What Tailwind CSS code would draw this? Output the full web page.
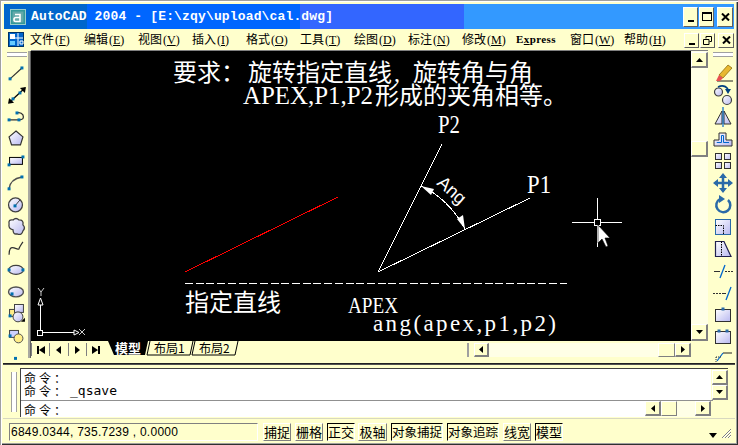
<!DOCTYPE html>
<html lang="zh">

<head>
    <meta charset="UTF-8" />
    <title>AutoCAD 2004</title>
    <script src="https://cdn.jsdelivr.net/npm/@tailwindcss/browser@4"></script>
</head>

<body class="bg-[#ffffcc] overflow-hidden">

    <!-- shared gradients for the toolbar icons -->
    <svg class="absolute w-0 h-0">
        <defs>
            <linearGradient id="lav" x1="0" y1="0" x2="1" y2="1">
                <stop offset="0" stop-color="#ffffff" />
                <stop offset="1" stop-color="#b8b8f0" />
            </linearGradient>
        </defs>
    </svg>

    <!-- Window -->
    <div class="w-[738px] h-[445px] flex flex-col pt-[4px] px-[3px] pb-[3px] bg-[#ffffcc] shadow-[inset_1px_1px_0_#a0a0a0,inset_2px_2px_0_#ffffff,inset_-1px_-1px_0_#303030,inset_-2px_-2px_0_#a0a0a0] font-['Noto_Sans_CJK_SC',sans-serif] text-black overflow-hidden">

        <!-- Title bar -->
        <div class="h-[25px] mx-[1px] shrink-0 flex items-center bg-[linear-gradient(90deg,#0066cc_83px,#0066ff_83px,#0066ff_296px,#3366ff_296px,#3366ff_460px,#3399ff_460px)]">
            <svg class="ml-[6px] w-[16px] h-[16px]" viewBox="0 0 16 16">
                <rect x="0.5" y="0.5" width="15" height="15" fill="#339999" stroke="#99cccc" />
                <rect x="2.5" y="2.5" width="11" height="11" fill="#66aaaa" />
                <path d="M5 5.5h5v7H5.5q-1.5 0-1.5-2t2-2h4M5 5.5" fill="none" stroke="#ffffff" stroke-width="1.6" />
            </svg>
            <span class="ml-[5px] font-['Liberation_Mono',monospace] font-bold text-[13px] tracking-[0.15px] text-white whitespace-pre">AutoCAD 2004 - [E:\zqy\upload\cal.dwg]</span>
            <div class="ml-auto flex mr-[1px]">
                <div class="w-[15px] h-[20px] flex items-end justify-center pb-[4px] bg-[#ffffcc] border-t border-l border-t-white border-l-white border-r border-b border-r-[#606060] border-b-[#606060]">
                    <div class="w-[6px] h-[2px] bg-black"></div>
                </div>
                <div class="ml-[1px] w-[15px] h-[20px] flex items-center justify-center bg-[#ffffcc] border-t border-l border-t-white border-l-white border-r border-b border-r-[#606060] border-b-[#606060]">
                    <div class="w-[10px] h-[9px] border border-t-2 border-black"></div>
                </div>
                <div class="ml-[3px] w-[16px] h-[20px] flex items-center justify-center bg-[#ffffcc] border-t border-l border-t-white border-l-white border-r border-b border-r-[#606060] border-b-[#606060]">
                    <svg class="w-[9px] h-[8px]" viewBox="0 0 9 8"><path d="M1 0.5 8 7.5M8 0.5 1 7.5" stroke="#000" stroke-width="2" /></svg>
                </div>
            </div>
        </div>

        <!-- Menu bar -->
        <div class="h-[21px] shrink-0 flex items-center text-[12px] leading-none">
            <svg class="ml-[5px] w-[16px] h-[15px]" viewBox="0 0 16 15">
                <rect x="0.5" y="0.5" width="15" height="14" fill="#0066cc" stroke="#003366" />
                <rect x="2" y="2" width="5" height="5" fill="#ffffff" />
                <rect x="2" y="9" width="5" height="4" fill="#66ccff" />
                <path d="M10 1v13M7 6h8M12 9h3v3h-3z" stroke="#ffffff" fill="none" />
            </svg>
            <div class="ml-[6px] w-[54px]">文件<span class="font-['Liberation_Serif',serif] text-[12px] ml-[1px]">(<u>F</u>)</span></div>
            <div class="w-[54px]">编辑<span class="font-['Liberation_Serif',serif] text-[12px] ml-[1px]">(<u>E</u>)</span></div>
            <div class="w-[54px]">视图<span class="font-['Liberation_Serif',serif] text-[12px] ml-[1px]">(<u>V</u>)</span></div>
            <div class="w-[54px]">插入<span class="font-['Liberation_Serif',serif] text-[12px] ml-[1px]">(<u>I</u>)</span></div>
            <div class="w-[54px]">格式<span class="font-['Liberation_Serif',serif] text-[12px] ml-[1px]">(<u>O</u>)</span></div>
            <div class="w-[54px]">工具<span class="font-['Liberation_Serif',serif] text-[12px] ml-[1px]">(<u>T</u>)</span></div>
            <div class="w-[54px]">绘图<span class="font-['Liberation_Serif',serif] text-[12px] ml-[1px]">(<u>D</u>)</span></div>
            <div class="w-[54px]">标注<span class="font-['Liberation_Serif',serif] text-[12px] ml-[1px]">(<u>N</u>)</span></div>
            <div class="w-[54px]">修改<span class="font-['Liberation_Serif',serif] text-[12px] ml-[1px]">(<u>M</u>)</span></div>
            <div class="w-[54px] font-['Liberation_Serif',serif] font-bold text-[11px] tracking-[0.4px]">E<u>x</u>press</div>
            <div class="w-[54px]">窗口<span class="font-['Liberation_Serif',serif] text-[12px] ml-[1px]">(<u>W</u>)</span></div>
            <div class="w-[54px]">帮助<span class="font-['Liberation_Serif',serif] text-[12px] ml-[1px]">(<u>H</u>)</span></div>
            <div class="ml-[6px] flex mt-[1px]">
                <div class="w-[15px] h-[15px] flex items-end justify-center pb-[2px] bg-[#ffffcc] border-t border-l border-t-white border-l-white border-r border-b border-r-[#606060] border-b-[#606060]">
                    <div class="w-[6px] h-[2px] bg-black"></div>
                </div>
                <div class="ml-[1px] w-[15px] h-[15px] flex items-center justify-center bg-[#ffffcc] border-t border-l border-t-white border-l-white border-r border-b border-r-[#606060] border-b-[#606060]">
                    <svg class="w-[9px] h-[9px]" viewBox="0 0 9 9"><path d="M3 2.5V.5h5.500v5H6.500M.5 3.500h5.500v5H.5z" fill="none" stroke="#000" /></svg>
                </div>
                <div class="ml-[3px] w-[16px] h-[15px] flex items-center justify-center bg-[#ffffcc] border-t border-l border-t-white border-l-white border-r border-b border-r-[#606060] border-b-[#606060]">
                    <svg class="w-[9px] h-[8px]" viewBox="0 0 9 8"><path d="M1 0.5 8 7.5M8 0.5 1 7.5" stroke="#000" stroke-width="2" /></svg>
                </div>
            </div>
        </div>

        <!-- Main area -->
        <div class="h-[313px] shrink-0 flex">

            <!-- Draw toolbar -->
            <div class="w-[25px] shrink-0 flex flex-col items-start overflow-hidden">
                <div class="ml-[4px] mt-[2px] w-[20px] h-[5px] border-y border-[#a0a0a0] bg-white shrink-0"></div>
                <div class="mt-[6px] h-[299px] flex flex-col overflow-hidden">
                    <!-- line -->
                    <svg class="w-[22px] h-[21.8px] ml-[2px] shrink-0" viewBox="0 0 22 22"><path d="M5 16 17 5" stroke="#303030" stroke-width="1.2" /><rect x="3.500" y="14.500" width="3" height="3" fill="#0070b0" /><rect x="15.500" y="3.500" width="3" height="3" fill="#0070b0" /></svg>
                    <!-- xline -->
                    <svg class="w-[22px] h-[21.8px] ml-[2px] shrink-0" viewBox="0 0 22 22"><path d="M4 18 20 3" stroke="#000" stroke-width="1.3" /><path d="M3 19 4 13 9 18zM21 2 20 8 15 3z" fill="#000" /><rect x="6.500" y="12.500" width="3" height="3" fill="#0070b0" /><rect x="13.500" y="6.500" width="3" height="3" fill="#0070b0" /></svg>
                    <!-- pline -->
                    <svg class="w-[22px] h-[21.8px] ml-[2px] shrink-0" viewBox="0 0 22 22"><path d="M4 13H14Q20 13 18 8 16 5 12 6" fill="none" stroke="#303030" stroke-width="1.3" /><rect x="2.500" y="11.500" width="3" height="3" fill="#0070b0" /><rect x="12.500" y="11.500" width="3" height="3" fill="#0070b0" /><rect x="10.500" y="4.500" width="3" height="3" fill="#0070b0" /></svg>
                    <!-- polygon -->
                    <svg class="w-[22px] h-[21.8px] ml-[2px] shrink-0" viewBox="0 0 22 22"><path d="M11 3 18 9 15.500 17H6.500L4 9z" fill="url(#lav)" stroke="#303030" stroke-width="1.200" /></svg>
                    <!-- rectangle -->
                    <svg class="w-[22px] h-[21.8px] ml-[2px] shrink-0" viewBox="0 0 22 22"><rect x="4.500" y="7.500" width="13" height="7" fill="url(#lav)" stroke="#000" /><rect x="2.500" y="13.500" width="3" height="3" fill="#0070b0" /><rect x="16.500" y="5.500" width="3" height="3" fill="#0070b0" /></svg>
                    <!-- arc -->
                    <svg class="w-[22px] h-[21.8px] ml-[2px] shrink-0" viewBox="0 0 22 22"><path d="M4 17Q5 7 17 5" fill="none" stroke="#505050" stroke-width="1.500" /><rect x="2.500" y="15.500" width="3" height="3" fill="#0070b0" /><rect x="15.500" y="3.500" width="3" height="3" fill="#0070b0" /></svg>
                    <!-- circle -->
                    <svg class="w-[22px] h-[21.8px] ml-[2px] shrink-0" viewBox="0 0 22 22"><circle cx="10.500" cy="11" r="7" fill="url(#lav)" stroke="#404040" stroke-width="1.300" /><path d="M10 12 15 6" stroke="#404040" /><rect x="8.500" y="10.500" width="3" height="3" fill="#0070b0" /></svg>
                    <!-- revcloud -->
                    <svg class="w-[22px] h-[21.8px] ml-[2px] shrink-0" viewBox="0 0 22 22"><path d="M4 8Q3 3 8 4 11 1 14 4 19 4 18 9 21 12 18 15 17 20 12 18 8 19 8 14 3 13 4 8z" fill="url(#lav)" stroke="#404040" stroke-width="1.300" /></svg>
                    <!-- spline -->
                    <svg class="w-[22px] h-[21.8px] ml-[2px] shrink-0" viewBox="0 0 22 22"><path d="M4 18Q4 9 9 11T14 12 18 5" fill="none" stroke="#303030" stroke-width="1.200" /></svg>
                    <!-- ellipse -->
                    <svg class="w-[22px] h-[21.8px] ml-[2px] shrink-0" viewBox="0 0 22 22"><ellipse cx="11" cy="11" rx="7.500" ry="4.500" fill="url(#lav)" stroke="#404040" stroke-width="1.200" /><rect x="2.500" y="9.500" width="3" height="3" fill="#0070b0" /><rect x="16.500" y="9.500" width="3" height="3" fill="#0070b0" /></svg>
                    <!-- ellipse arc -->
                    <svg class="w-[22px] h-[21.8px] ml-[2px] shrink-0" viewBox="0 0 22 22"><ellipse cx="11" cy="11" rx="7.500" ry="5" fill="url(#lav)" stroke="#505050" stroke-width="1.400" /><rect x="5.500" y="11.500" width="3" height="3" fill="#0070b0" /></svg>
                    <!-- insert block -->
                    <svg class="w-[22px] h-[21.8px] ml-[2px] shrink-0" viewBox="0 0 22 22"><rect x="4.500" y="6.500" width="8" height="7" fill="#ffee88" stroke="#404040" /><rect x="9.500" y="1.500" width="9" height="8" fill="url(#lav)" stroke="#404040" /><circle cx="13" cy="14" r="5" fill="url(#lav)" stroke="#404040" /><rect x="3.500" y="11.500" width="3" height="3" fill="#0070b0" /><path d="M16 19h4v-4z" fill="#000" /></svg>
                    <!-- make block -->
                    <svg class="w-[22px] h-[21.8px] ml-[2px] shrink-0" viewBox="0 0 22 22"><rect x="4.500" y="5.500" width="9" height="7" fill="#ccd0ff" stroke="#404040" /><circle cx="13.500" cy="13.500" r="4.500" fill="#ffee88" stroke="#505050" /><rect x="3.500" y="9.500" width="3" height="3" fill="#0070b0" /></svg>
                    <!-- point, cut off by the row below -->
                    <svg class="w-[22px] h-[21.8px] ml-[2px] shrink-0" viewBox="0 0 22 22"><rect x="9" y="11" width="3" height="3" fill="#0070b0" /></svg>
                </div>
            </div>

            <div class="w-[3px] shrink-0 mt-[1px] h-[307px] bg-[#a8a8a0] border-r border-[#606060]"></div>

            <!-- Drawing + scrollbars -->
            <div class="w-[677px] shrink-0 flex flex-col">
                <div class="h-[1px] bg-[#808080]"></div>
                <div class="h-[290px] flex">

                    <!-- Drawing area -->
                    <svg class="w-[660px] h-[290px] bg-black block" viewBox="31 51 660 290" shape-rendering="crispEdges">
                        <text x="173" y="81" fill="#fff" font-size="24" font-family="Noto Sans CJK SC">要求：<tspan x="248">旋转指定直线</tspan><tspan x="394" font-family="Liberation Serif">,</tspan><tspan x="413">旋转角与角</tspan></text>
                        <text y="104" fill="#fff" font-size="25" font-family="Liberation Serif" x="243" textLength="130" lengthAdjust="spacingAndGlyphs">APEX,P1,P2</text>
                        <text x="375" y="104" fill="#fff" font-size="24" font-family="Noto Sans CJK SC">形成的夹角相等。</text>

                        <text x="438" y="133" fill="#fff" font-size="25" font-family="Liberation Serif" textLength="22" lengthAdjust="spacingAndGlyphs">P2</text>
                        <text x="527" y="193" fill="#fff" font-size="25" font-family="Liberation Serif" textLength="24" lengthAdjust="spacingAndGlyphs">P1</text>

                        <g fill="none" stroke="#fff" stroke-width="1">
                            <path d="M378 272 442 144" />
                            <path d="M378 272 530 198" />
                            <path d="M421 186Q449 199 465 229" />
                        </g>
                        <g shape-rendering="auto" fill="#fff">
                            <path d="M421 186 434 189 431 195z" />
                            <path d="M465 229 457 219 463 215z" />
                        </g>
                        <text transform="translate(436 184) rotate(42)" fill="#fff" font-size="18" font-family="Liberation Sans">Ang</text>

                        <path d="M185 272 338 197" stroke="#ff0000" stroke-width="1" />
                        <path d="M185 283.500H567" stroke="#fff" stroke-dasharray="8 2.700" />

                        <text x="185" y="311" fill="#fff" font-size="24" font-family="Noto Sans CJK SC">指定直线</text>
                        <text x="348" y="313" fill="#fff" font-size="24" font-family="Liberation Serif" textLength="50" lengthAdjust="spacingAndGlyphs">APEX</text>
                        <text x="373" y="331" fill="#fff" font-size="23" font-family="Liberation Serif" textLength="183" lengthAdjust="spacing">ang(apex,p1,p2)</text>

                        <!-- crosshair -->
                        <path d="M572 222.500H594M600 222.500H622M597.500 198V219M597.500 226V247" stroke="#fff" />
                        <rect x="594.500" y="219.500" width="6" height="6" fill="none" stroke="#fff" />
                        <path shape-rendering="auto" d="M598 225V243L602 239 606 247 608 246 605 238H610z" fill="#fff" stroke="#000" stroke-width="0.600" />

                        <!-- UCS icon -->
                        <path d="M40.500 305V330M43 332.500H74" stroke="#fff" />
                        <rect x="37.500" y="330.500" width="5" height="5" fill="none" stroke="#fff" />
                        <path shape-rendering="auto" d="M40.500 298 38 305H43z" fill="none" stroke="#fff" />
                        <path shape-rendering="auto" d="M74 330V335L79 332.500z" fill="none" stroke="#fff" />
                        <path shape-rendering="auto" d="M38 288 41 292 44 288M41 292V296" fill="none" stroke="#ccc" />
                        <path shape-rendering="auto" d="M79 329 85 335M85 329 79 335" fill="none" stroke="#ccc" />
                    </svg>

                    <!-- Vertical scrollbar -->
                    <div class="w-[17px] shrink-0 flex flex-col bg-[#ffffe6]">
                        <div class="h-[1px]"></div>
                        <div class="h-[16px] flex items-center justify-center bg-[#ffffcc] border-t border-l border-t-white border-l-white border-r-2 border-b-2 border-r-[#808080] border-b-[#808080]">
                            <svg class="w-[7px] h-[4px]" viewBox="0 0 7 4"><path d="M3.500 0 7 4H0z" /></svg>
                        </div>
                        <div class="h-[73px]"></div>
                        <div class="h-[16px] bg-[#ffffcc] border-t border-l border-t-white border-l-white border-r-2 border-b-2 border-r-[#808080] border-b-[#808080]"></div>
                        <div class="flex-1"></div>
                        <div class="h-[17px] flex items-center justify-center bg-[#ffffcc] border-t border-l border-t-white border-l-white border-r-2 border-b-2 border-r-[#808080] border-b-[#808080]">
                            <svg class="w-[7px] h-[4px]" viewBox="0 0 7 4"><path d="M0 0H7L3.500 4z" /></svg>
                        </div>
                    </div>
                </div>

                <!-- Layout tabs + horizontal scrollbar -->
                <div class="h-[16px] flex items-start">
                    <div class="mt-[2px] h-[13px] w-[74px] shrink-0 grid grid-cols-4 divide-x divide-[#808080] border-l border-[#808080]">
                        <div class="flex items-center justify-center"><svg class="w-[8px] h-[8px]" viewBox="0 0 8 8"><path d="M0 0H2V8H0zM8 0V8L2 4z" /></svg></div>
                        <div class="flex items-center justify-center"><svg class="w-[5px] h-[8px]" viewBox="0 0 5 8"><path d="M5 0V8L0 4z" /></svg></div>
                        <div class="flex items-center justify-center"><svg class="w-[5px] h-[8px]" viewBox="0 0 5 8"><path d="M0 0V8L5 4z" /></svg></div>
                        <div class="flex items-center justify-center"><svg class="w-[8px] h-[8px]" viewBox="0 0 8 8"><path d="M0 0V8L6 4zM6 0H8V8H6z" /></svg></div>
                    </div>
                    <svg class="w-[136px] h-[16px] shrink-0 overflow-visible" viewBox="105 341 136 16">
                        <path d="M108 341 114 355H145L148 341z" fill="#000" />
                        <text x="115" y="353" fill="#fff" font-size="13" font-weight="700" font-family="Noto Sans CJK SC">模型</text>
                        <path d="M150 341 147 355H190L193 341" fill="none" stroke="#000" />
                        <text x="154" y="353" font-size="12" font-family="Noto Sans CJK SC">布局1</text>
                        <path d="M195 341 192 355H235L238 341" fill="none" stroke="#000" />
                        <text x="199" y="353" font-size="12" font-family="Noto Sans CJK SC">布局2</text>
                    </svg>
                    <div class="ml-[226px] mt-[2px] w-[4px] h-[14px] border-l-2 border-[#a0a0a0] shrink-0"></div>
                    <div class="ml-[3px] h-[14px] w-[217px] shrink-0 flex mt-[2px] bg-[#ffffe6]">
                        <div class="w-[15px] flex items-center justify-center bg-[#ffffcc] border-t border-l border-t-white border-l-white border-r-2 border-b-2 border-r-[#808080] border-b-[#808080]">
                            <svg class="w-[4px] h-[7px]" viewBox="0 0 4 7"><path d="M4 0V7L0 3.500z" /></svg>
                        </div>
                        <div class="w-[169px]"></div>
                        <div class="w-[17px] bg-[#ffffcc] border-t border-l border-t-white border-l-white border-r border-b border-r-[#808080] border-b-[#808080]"></div>
                        <div class="w-[16px] flex items-center justify-center bg-[#ffffcc] border-t border-l border-t-white border-l-white border-r-2 border-b-2 border-r-[#808080] border-b-[#808080]">
                            <svg class="w-[4px] h-[7px]" viewBox="0 0 4 7"><path d="M0 0V7L4 3.500z" /></svg>
                        </div>
                    </div>
                </div>
            </div>

            <div class="w-[3px] shrink-0"></div>

            <!-- Modify toolbar -->
            <div class="flex-1 flex flex-col overflow-hidden">
                <div class="ml-[2px] mt-[2px] w-[20px] h-[5px] border-y border-[#a0a0a0] bg-white shrink-0"></div>
                <div class="mt-[5px] flex flex-col">
                    <!-- erase -->
                    <svg class="w-[22px] h-[22px] ml-[1px] shrink-0" viewBox="0 0 22 22"><path d="M5 19H21" stroke="#202020" /><path d="M7 13 16 3 20 6 11 16z" fill="#e8b830" stroke="#806000" stroke-width="0.700" /><path d="M7 13 11 16 8 19H4z" fill="#e85050" /></svg>
                    <!-- copy -->
                    <svg class="w-[22px] h-[22px] ml-[1px] shrink-0" viewBox="0 0 22 22"><circle cx="6.500" cy="8" r="4" fill="url(#lav)" stroke="#404040" stroke-width="1.200" /><circle cx="15" cy="16" r="4.500" fill="url(#lav)" stroke="#404040" stroke-width="1.200" /><path d="M6 3Q12 0 16 5" fill="none" stroke="#004080" stroke-width="1.500" /><path d="M13 5H19L16 10z" fill="#004080" /></svg>
                    <!-- mirror -->
                    <svg class="w-[22px] h-[22px] ml-[1px] shrink-0" viewBox="0 0 22 22"><path d="M10 5 3 18H10zM12 5V18H19z" fill="url(#lav)" stroke="#303030" /><path d="M11 1V21" stroke="#0066cc" stroke-width="1.200" /></svg>
                    <!-- offset -->
                    <svg class="w-[22px] h-[22px] ml-[1px] shrink-0" viewBox="0 0 22 22"><path d="M2 18V12H7V5H14V12H20V18z" fill="url(#lav)" stroke="#303030" /><path d="M5 15V14.500H9.500V7.500H11.500V14.500H17" fill="none" stroke="#0066cc" /></svg>
                    <!-- array -->
                    <svg class="w-[22px] h-[22px] ml-[1px] shrink-0" viewBox="0 0 22 22"><rect x="3.500" y="3.500" width="6" height="6" fill="url(#lav)" stroke="#303030" /><rect x="12.500" y="3.500" width="6" height="6" fill="url(#lav)" stroke="#303030" /><rect x="3.500" y="12.500" width="6" height="6" fill="url(#lav)" stroke="#303030" /><rect x="12.500" y="12.500" width="6" height="6" fill="url(#lav)" stroke="#303030" /></svg>
                    <!-- move -->
                    <svg class="w-[22px] h-[22px] ml-[1px] shrink-0" viewBox="0 0 22 22"><path d="M11 3V19M3 11H19" stroke="#2a6aa8" stroke-width="2.500" /><path d="M11 1 15 6H7zM11 21 15 16H7zM1 11 6 7V15zM21 11 16 7V15z" fill="#2a6aa8" /></svg>
                    <!-- rotate -->
                    <svg class="w-[22px] h-[22px] ml-[1px] shrink-0" viewBox="0 0 22 22"><path d="M8 5A7 7 0 1 0 16 6" fill="none" stroke="#2a6aa8" stroke-width="2.500" /><path d="M7 1 13 5 7 9z" fill="#2a6aa8" /></svg>
                    <!-- scale -->
                    <svg class="w-[22px] h-[22px] ml-[1px] shrink-0" viewBox="0 0 22 22"><rect x="3.500" y="3.500" width="15" height="15" fill="url(#lav)" stroke="#2a6aa8" /><path d="M3.500 9.500H11.500V18.500" fill="none" stroke="#000" stroke-dasharray="1.500 1" /></svg>
                    <!-- stretch -->
                    <svg class="w-[22px] h-[22px] ml-[1px] shrink-0" viewBox="0 0 22 22"><path d="M3.500 3.500H12L19 18.500H3.500z" fill="url(#lav)" stroke="#202050" stroke-width="1.200" /><path d="M9.500 3.500V18.500" stroke="#000" stroke-dasharray="1.500 1" /></svg>
                    <!-- trim -->
                    <svg class="w-[22px] h-[22px] ml-[1px] shrink-0" viewBox="0 0 22 22"><path d="M2 11.500H8" stroke="#303030" /><path d="M13 11.500H21" stroke="#303030" stroke-dasharray="2 1" /><path d="M8 18 13 5" stroke="#0066cc" stroke-width="1.300" /></svg>
                    <!-- extend -->
                    <svg class="w-[22px] h-[22px] ml-[1px] shrink-0" viewBox="0 0 22 22"><path d="M1 11.500H10" stroke="#303030" stroke-dasharray="2 1" /><path d="M10 11.500H14" stroke="#303030" /><path d="M14 18 19 5" stroke="#0066cc" stroke-width="1.300" /></svg>
                    <!-- break at point -->
                    <svg class="w-[22px] h-[22px] ml-[1px] shrink-0" viewBox="0 0 22 22"><rect x="3.500" y="5.500" width="15" height="12" fill="url(#lav)" stroke="#303030" /><rect x="9.500" y="3.500" width="3" height="3" fill="#2a6aa8" /></svg>
                    <!-- break -->
                    <svg class="w-[22px] h-[22px] ml-[1px] shrink-0" viewBox="0 0 22 22"><rect x="3.500" y="5.500" width="15" height="12" fill="url(#lav)" stroke="#303030" /><rect x="5.500" y="3.500" width="3" height="3" fill="#2a6aa8" /><rect x="13.500" y="3.500" width="3" height="3" fill="#2a6aa8" /></svg>
                    <!-- chamfer -->
                    <svg class="w-[22px] h-[22px] ml-[1px] shrink-0" viewBox="0 0 22 22"><path d="M11 5H20" stroke="#202020" /><path d="M5 13 11 5" stroke="#0066cc" stroke-width="1.200" /><path d="M4 9H10M4 9V15" stroke="#303030" stroke-dasharray="1 1" /></svg>
                </div>
            </div>
        </div>

        <div class="h-[2px] shrink-0 bg-[#202020] border-b border-[#505050]"></div>

        <!-- Command window -->
        <div class="h-[53px] shrink-0 flex">
            <div class="ml-[8px] mt-[7px] w-[6px] h-[40px] border-x border-[#a0a0a0] bg-white shrink-0"></div>
            <div class="ml-[3px] mt-[3px] w-[708px] h-[49px] shrink-0 flex flex-col border-t border-l border-[#404040] text-[12px] leading-[13px]">
                <div class="h-[31px] flex shrink-0">
                    <div class="w-[690px] bg-white pl-[3px] pt-[2px]">
                        <div class="h-[13px] tracking-[3px]">命令：</div>
                        <div class="h-[13px] flex"><span class="tracking-[3px]">命令：</span><span class="ml-[1px] text-[13px] font-['DejaVu_Sans_Mono',monospace]">_qsave</span></div>
                    </div>
                    <div class="flex-1 flex flex-col pt-[1px] pl-[1px]">
                        <div class="h-[15px] flex items-center justify-center bg-[#ffffcc] border-t border-l border-t-white border-l-white border-r-2 border-b-2 border-r-[#808080] border-b-[#808080]">
                            <svg class="w-[7px] h-[4px]" viewBox="0 0 7 4"><path d="M3.500 0 7 4H0z" /></svg>
                        </div>
                        <div class="h-[15px] flex items-center justify-center bg-[#ffffcc] border-t border-l border-t-white border-l-white border-r-2 border-b-2 border-r-[#808080] border-b-[#808080]">
                            <svg class="w-[7px] h-[4px]" viewBox="0 0 7 4"><path d="M0 0H7L3.500 4z" /></svg>
                        </div>
                    </div>
                </div>
                <div class="h-[1px] w-[692px] bg-[#909090] shrink-0"></div>
                <div class="flex-1 flex">
                    <div class="w-[624px] bg-white pl-[3px] pt-[2px] tracking-[3px]">命令：</div>
                    <div class="w-[66px] flex bg-[#ffffe6] pb-[1px]">
                        <div class="w-[16px] flex items-center justify-center bg-[#ffffcc] border-t border-l border-t-white border-l-white border-r-2 border-b-2 border-r-[#808080] border-b-[#808080]">
                            <svg class="w-[4px] h-[7px]" viewBox="0 0 4 7"><path d="M4 0V7L0 3.500z" /></svg>
                        </div>
                        <div class="w-[16px] bg-[#ffffcc] border-t border-l border-t-white border-l-white border-r border-b border-r-[#808080] border-b-[#808080]"></div>
                        <div class="flex-1"></div>
                        <div class="w-[16px] flex items-center justify-center bg-[#ffffcc] border-t border-l border-t-white border-l-white border-r-2 border-b-2 border-r-[#808080] border-b-[#808080]">
                            <svg class="w-[4px] h-[7px]" viewBox="0 0 4 7"><path d="M0 0V7L4 3.500z" /></svg>
                        </div>
                    </div>
                </div>
            </div>
        </div>

        <!-- Status bar -->
        <div class="h-[24px] shrink-0 flex items-start pt-[4px] border-t border-[#d8d8c0] text-[13px] leading-[16px] whitespace-nowrap">
            <div class="ml-[6px] w-[249px] h-[18px] border-t border-l border-t-[#808080] border-l-[#808080] border-r border-b border-r-white border-b-white pl-[1px] font-['Liberation_Sans',sans-serif] text-[12px] tracking-[0.25px] whitespace-pre">6849.0344, 735.7239 , 0.0000</div>
            <div class="ml-[5px] w-[28px] h-[18px] flex justify-center border-t border-l border-t-white border-l-white border-r border-b border-r-[#808080] border-b-[#808080]">捕捉</div>
            <div class="ml-[4px] w-[28px] h-[18px] flex justify-center border-t border-l border-t-white border-l-white border-r border-b border-r-[#808080] border-b-[#808080]">栅格</div>
            <div class="ml-[4px] w-[28px] h-[18px] flex justify-center border-t border-l border-t-black border-l-black border-r border-b border-r-white border-b-white">正交</div>
            <div class="ml-[3px] w-[29px] h-[18px] flex justify-center border-t border-l border-t-white border-l-white border-r border-b border-r-[#808080] border-b-[#808080]">极轴</div>
            <div class="ml-[4px] w-[52px] h-[18px] flex justify-center text-[12.5px] border-t border-l border-t-black border-l-black border-r border-b border-r-white border-b-white">对象捕捉</div>
            <div class="ml-[4px] w-[52px] h-[18px] flex justify-center text-[12.5px] border-t border-l border-t-black border-l-black border-r border-b border-r-white border-b-white">对象追踪</div>
            <div class="ml-[4px] w-[28px] h-[18px] flex justify-center border-t border-l border-t-white border-l-white border-r border-b border-r-[#808080] border-b-[#808080]">线宽</div>
            <div class="ml-[4px] w-[28px] h-[18px] flex justify-center border-t border-l border-t-black border-l-black border-r border-b border-r-white border-b-white">模型</div>
            <svg class="ml-[146px] mt-[10px] w-[8px] h-[5px]" viewBox="0 0 8 5"><path d="M0 0H8L4 5z" /></svg>
            <svg class="ml-[4px] mt-[4px] w-[11px] h-[12px]" viewBox="0 0 11 12"><path d="M1 11 10 2M4 11 10 5M7 11 10 8" stroke="#808080" /><path d="M2 11 10 3M5 11 10 6M8 11 10 9" stroke="#ffffff" /></svg>
        </div>
    </div>

</body>

</html>
